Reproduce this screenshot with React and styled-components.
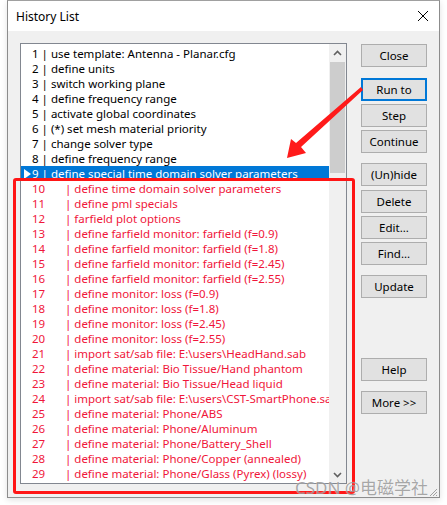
import styled, { createGlobalStyle } from "styled-components";

const GlobalStyle = createGlobalStyle`
  html, body {
    margin: 0;
    padding: 0;
    background: #ffffff;
  }
  body {
    font-family: "Noto Sans", "DejaVu Sans", sans-serif;
  }
`;

const rows = [
  "use template: Antenna - Planar.cfg",
  "define units",
  "switch working plane",
  "define frequency range",
  "activate global coordinates",
  "(*) set mesh material priority",
  "change solver type",
  "define frequency range",
  "define special time domain solver parameters",
  "define time domain solver parameters",
  "define pml specials",
  "farfield plot options",
  "define farfield monitor: farfield (f=0.9)",
  "define farfield monitor: farfield (f=1.8)",
  "define farfield monitor: farfield (f=2.45)",
  "define farfield monitor: farfield (f=2.55)",
  "define monitor: loss (f=0.9)",
  "define monitor: loss (f=1.8)",
  "define monitor: loss (f=2.45)",
  "define monitor: loss (f=2.55)",
  "import sat/sab file: E:\\users\\HeadHand.sab",
  "define material: Bio Tissue/Hand phantom",
  "define material: Bio Tissue/Head liquid",
  "import sat/sab file: E:\\users\\CST-SmartPhone.sab",
  "define material: Phone/ABS",
  "define material: Phone/Aluminum",
  "define material: Phone/Battery_Shell",
  "define material: Phone/Copper (annealed)",
  "define material: Phone/Glass (Pyrex) (lossy)",
];

const buttons = [
  { label: "Close", space: 0 },
  { label: "Run to", space: 8, focused: true },
  { label: "Step", space: 0 },
  { label: "Continue", space: 0 },
  { label: "(Un)hide", space: 7 },
  { label: "Delete", space: 1 },
  { label: "Edit...", space: 0 },
  { label: "Find...", space: 0 },
  { label: "Update", space: 7 },
  { label: "Help", space: 57 },
  { label: "More >>", space: 7 },
];

const Page = styled.div`
  position: relative;
  width: 447px;
  height: 505px;
  overflow: hidden;
`;

const Window = styled.div`
  margin-left: 7px;
  width: 433px;
  height: 498px;
  box-sizing: border-box;
  border: 1px solid #8c8c8c;
  border-top-color: #a0a0a0;
  background: #f0f0f0;
  display: flex;
  flex-direction: column;
  box-shadow: 0 2px 6px rgba(0, 0, 0, 0.12);
`;

const TitleBar = styled.div`
  height: 30px;
  background: #ffffff;
  display: flex;
  align-items: center;
  justify-content: space-between;
  padding: 0 9px 0 8px;
  flex-shrink: 0;
`;

const Title = styled.span`
  font-family: "Noto Sans", sans-serif;
  font-size: 12px;
  color: #000;
`;

const CloseGlyph = styled.svg`
  width: 12px;
  height: 12px;
  margin-right: 1px;
`;

const Body = styled.div`
  flex: 1;
  display: flex;
  padding: 12px 12px 0 12px;
`;

const ListBox = styled.div`
  width: 327px;
  height: 441px;
  flex-shrink: 0;
  box-sizing: border-box;
  border: 1px solid #828790;
  background: #ffffff;
  display: flex;
`;

const Rows = styled.div`
  flex: 1;
  min-width: 0;
  padding-top: 2px;
  overflow: hidden;
`;

const Row = styled.div`
  height: 15px;
  display: flex;
  align-items: center;
  white-space: pre;
  font-family: "Noto Sans", sans-serif;
  font-size: 11.5px;
  line-height: 15px;
  color: ${(p) => (p.$selected ? "#ffffff" : p.$marked ? "#f0163a" : "#000000")};
  background: ${(p) => (p.$selected ? "#0078d7" : "transparent")};
`;

const Marker = styled.span`
  width: 11px;
  flex-shrink: 0;
  display: flex;
  align-items: center;
  justify-content: center;
  padding-left: 2px;
  box-sizing: border-box;
`;

const Num = styled.span`
  display: inline-block;
  width: ${(p) => (p.$wide ? "30px" : "auto")};
  flex-shrink: 0;
`;

const ScrollBar = styled.div`
  width: 17px;
  flex-shrink: 0;
  background: #f0f0f0;
  display: flex;
  flex-direction: column;
  align-items: center;
`;

const ScrollArrow = styled.div`
  height: 17px;
  width: 17px;
  display: flex;
  align-items: center;
  justify-content: center;
`;

const Thumb = styled.div`
  width: 15px;
  height: 111px;
  margin-top: 1px;
  background: #cdcdcd;
`;

const Spacer = styled.div`
  flex: 1;
`;

const ButtonColumn = styled.div`
  margin-left: 14px;
  padding-top: 1px;
  width: 66px;
  display: flex;
  flex-direction: column;
  gap: 3px;
`;

const DlgButton = styled.div`
  height: 23px;
  box-sizing: border-box;
  margin-top: ${(p) => p.$space}px;
  background: #e1e1e1;
  border: ${(p) => (p.$focused ? "2px solid #0078d7" : "1px solid #adadad")};
  display: flex;
  align-items: center;
  justify-content: center;
  font-family: "Noto Sans", sans-serif;
  font-size: 11.5px;
  color: #000;
`;

const RedBox = styled.div`
  position: absolute;
  left: 13px;
  top: 178px;
  width: 342px;
  height: 316px;
  box-sizing: border-box;
  border: 3px solid #ff1515;
  border-radius: 3px;
`;

const ArrowLayer = styled.svg`
  position: absolute;
  left: 0;
  top: 0;
  width: 447px;
  height: 505px;
  pointer-events: none;
`;

const Watermark = styled.div`
  position: absolute;
  left: 295px;
  top: 474px;
  font-family: "Noto Sans", "Noto Sans CJK SC", sans-serif;
  font-size: 17px;
  color: rgba(110, 110, 110, 0.6);
  text-shadow: 0 0 1px rgba(255, 255, 255, 0.8);
  white-space: nowrap;
`;

const Grip = styled.svg`
  position: absolute;
  right: 9px;
  bottom: 8px;
  width: 9px;
  height: 9px;
`;

const Chevron = ({ down }) => (
  <svg width="9" height="6" viewBox="0 0 9 6">
    <path
      d={down ? "M1 1 L4.5 4.5 L8 1" : "M1 5 L4.5 1.5 L8 5"}
      stroke="#606060"
      strokeWidth="1.6"
      fill="none"
    />
  </svg>
);

export default function App() {
  return (
    <Page>
      <GlobalStyle />
      <Window>
        <TitleBar>
          <Title>History List</Title>
          <CloseGlyph viewBox="0 0 12 12">
            <path d="M1 1 L11 11 M11 1 L1 11" stroke="#000" strokeWidth="1" />
          </CloseGlyph>
        </TitleBar>
        <Body>
          <ListBox>
            <Rows>
              {rows.map((text, i) => {
                const n = i + 1;
                return (
                  <Row key={n} $selected={n === 9} $marked={n >= 10}>
                    <Marker>
                      {n === 9 && (
                        <svg width="7" height="10" viewBox="0 0 7 10">
                          <path d="M0 0 L7 5 L0 10 Z" fill="#ffffff" />
                        </svg>
                      )}
                    </Marker>
                    <Num $wide={n >= 10}>{n}</Num>
                    {" | " + text}
                  </Row>
                );
              })}
            </Rows>
            <ScrollBar>
              <ScrollArrow>
                <Chevron />
              </ScrollArrow>
              <Thumb />
              <Spacer />
              <ScrollArrow>
                <Chevron down />
              </ScrollArrow>
            </ScrollBar>
          </ListBox>
          <ButtonColumn>
            {buttons.map((b) => (
              <DlgButton key={b.label} $space={b.space} $focused={b.focused}>
                {b.label}
              </DlgButton>
            ))}
          </ButtonColumn>
        </Body>
      </Window>
      <RedBox />
      <ArrowLayer viewBox="0 0 447 505">
        <polygon
          points="361,87 363,90 301,147 306,153 287,158 291,139 296,143"
          fill="#ff1a1a"
        />
      </ArrowLayer>
      <Watermark>CSDN @电磁学社</Watermark>
      <Grip viewBox="0 0 9 9">
        <path d="M8 1 L1 8 M8 4 L4 8 M8 7 L7 8" stroke="#a0a0a0" strokeWidth="1" />
      </Grip>
    </Page>
  );
}
